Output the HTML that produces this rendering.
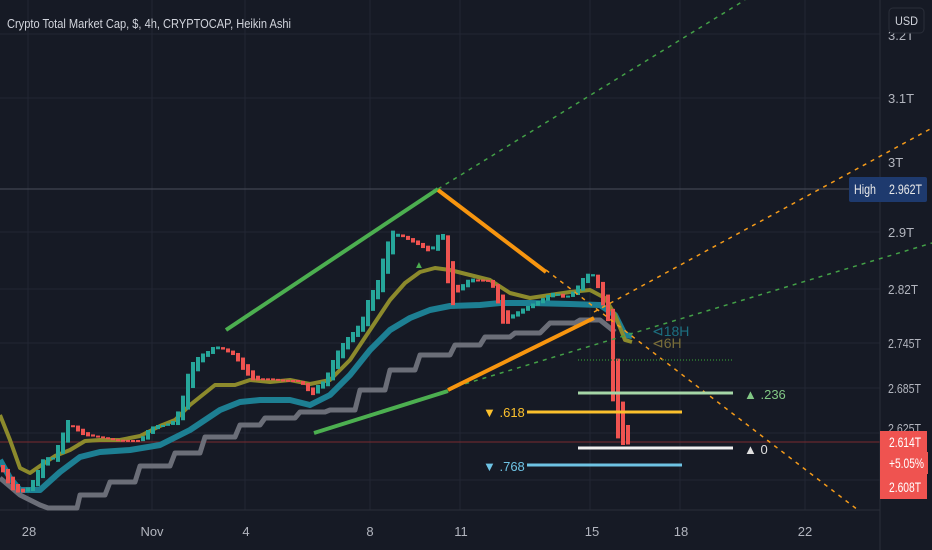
<!DOCTYPE html>
<html><head><meta charset="utf-8"><style>
html,body{margin:0;padding:0;background:#161a25;width:932px;height:550px;overflow:hidden}
svg{display:block}
text{font-family:"Liberation Sans",sans-serif}
</style></head><body>
<svg id="s" width="932" height="550" viewBox="0 0 932 550" xmlns="http://www.w3.org/2000/svg">
<rect width="932" height="550" fill="#161a25"/>
<g stroke="#222633" stroke-width="1">
<line x1="0" y1="34" x2="880" y2="34"/><line x1="0" y1="98" x2="880" y2="98"/><line x1="0" y1="232" x2="880" y2="232"/>
<line x1="0" y1="289" x2="880" y2="289"/><line x1="0" y1="343" x2="880" y2="343"/><line x1="0" y1="388" x2="880" y2="388"/>
<line x1="0" y1="433" x2="880" y2="433"/><line x1="0" y1="480" x2="880" y2="480"/>
<line x1="28" y1="0" x2="28" y2="510"/><line x1="152" y1="0" x2="152" y2="510"/><line x1="245" y1="0" x2="245" y2="510"/>
<line x1="370" y1="0" x2="370" y2="510"/><line x1="460" y1="0" x2="460" y2="510"/><line x1="590" y1="0" x2="590" y2="510"/>
<line x1="680" y1="0" x2="680" y2="510"/><line x1="805" y1="0" x2="805" y2="510"/>
</g>
<line x1="0" y1="189" x2="880" y2="189" stroke="#4a4e5a" stroke-width="1"/>
<line x1="0" y1="442" x2="880" y2="442" stroke="#7a2a2e" stroke-width="1"/>
<line x1="880" y1="0" x2="880" y2="550" stroke="#2a2e39"/>
<line x1="0" y1="510" x2="880" y2="510" stroke="#2a2e39"/>
<g id="ma"></g>
<g id="cd"></g>
<g stroke-dasharray="4,5" stroke-width="1.5" fill="none">
<line x1="438" y1="189" x2="745" y2="0" stroke="#43a047"/>
<line x1="448" y1="389" x2="932" y2="243" stroke="#43a047"/>
<line x1="594" y1="312" x2="932" y2="128" stroke="#f59b1a"/>
<line x1="546" y1="270" x2="858" y2="510" stroke="#f59b1a"/>
</g>
<line x1="226" y1="330" x2="438" y2="189" stroke="#4caf50" stroke-width="4"/>
<line x1="438" y1="190" x2="546" y2="272" stroke="#f7950f" stroke-width="4"/>
<line x1="314" y1="433" x2="448" y2="391" stroke="#4caf50" stroke-width="4"/>
<line x1="448" y1="390" x2="594" y2="318" stroke="#f7950f" stroke-width="4"/>
<line x1="578" y1="360" x2="733" y2="360" stroke="#2e7d32" stroke-width="1.5" stroke-dasharray="1,2"/>
<line x1="578" y1="393" x2="733" y2="393" stroke="#a5d6a7" stroke-width="3"/>
<line x1="527" y1="412" x2="682" y2="412" stroke="#fbc02d" stroke-width="3"/>
<line x1="578" y1="448" x2="733" y2="448" stroke="#f0f0f0" stroke-width="3"/>
<line x1="527" y1="465" x2="682" y2="465" stroke="#6ec3e4" stroke-width="3"/>
<g font-size="13">
<text x="744" y="399" fill="#81c784">▲ .236</text>
<text x="483" y="417" fill="#fbc02d">▼ .618</text>
<text x="744" y="454" fill="#e0e0e0">▲ 0</text>
<text x="483" y="471" fill="#6ec3e4">▼ .768</text>
<text x="652" y="336" fill="#1c6f80" font-size="14">⊲18H</text>
<text x="652" y="348" fill="#7a6e3a" font-size="14">⊲6H</text>
<text x="414" y="268" fill="#4caf50" font-size="10">▲</text>
</g>
<text x="7" y="28" fill="#d1d4dc" font-size="13" textLength="284" lengthAdjust="spacingAndGlyphs">Crypto Total Market Cap, $, 4h, CRYPTOCAP, Heikin Ashi</text>
<g fill="#b2b5be" font-size="13">
<text x="888" y="40">3.2T</text><text x="888" y="103">3.1T</text><text x="888" y="167">3T</text>
<text x="888" y="237">2.9T</text><text x="888" y="294" textLength="30" lengthAdjust="spacingAndGlyphs">2.82T</text><text x="888" y="348" textLength="33" lengthAdjust="spacingAndGlyphs">2.745T</text>
<text x="888" y="393" textLength="33" lengthAdjust="spacingAndGlyphs">2.685T</text><text x="888" y="433" textLength="33" lengthAdjust="spacingAndGlyphs">2.625T</text>
</g>
<rect x="889" y="8" width="35" height="25" rx="4" fill="#161a25" stroke="#2a2e39"/>
<text x="895" y="25" fill="#d1d4dc" font-size="12" textLength="23" lengthAdjust="spacingAndGlyphs">USD</text>
<rect x="849" y="177" width="78" height="25" rx="2" fill="#1e3a6e"/>
<text x="854" y="194" fill="#e8e8e8" font-size="14" textLength="22" lengthAdjust="spacingAndGlyphs">High</text>
<text x="889" y="194" fill="#e8e8e8" font-size="14" textLength="33" lengthAdjust="spacingAndGlyphs">2.962T</text>
<rect x="880" y="431" width="47" height="22" fill="#ef5350"/>
<rect x="880" y="452" width="48" height="22" fill="#ef5350"/>
<rect x="880" y="473" width="47" height="26" fill="#ef5350"/>
<g fill="#fff" font-size="14"><text x="889" y="447" textLength="32" lengthAdjust="spacingAndGlyphs">2.614T</text><text x="889" y="468" textLength="35" lengthAdjust="spacingAndGlyphs">+5.05%</text><text x="889" y="492" textLength="32" lengthAdjust="spacingAndGlyphs">2.608T</text></g>
<g fill="#b2b5be" font-size="13" text-anchor="middle">
<text x="29" y="536">28</text><text x="152" y="536">Nov</text><text x="246" y="536">4</text><text x="370" y="536">8</text>
<text x="461" y="536">11</text><text x="592" y="536">15</text><text x="681" y="536">18</text><text x="805" y="536">22</text>
</g>
</svg>
<script>
(function(){
var NS="http://www.w3.org/2000/svg";
function pl(g,pts,c,w){var p=document.createElementNS(NS,"polyline");p.setAttribute("points",pts.map(function(a){return a.join(",");}).join(" "));p.setAttribute("fill","none");p.setAttribute("stroke",c);p.setAttribute("stroke-width",w);p.setAttribute("stroke-linejoin","round");g.appendChild(p);}
var ma=document.getElementById("ma");
var gray=[[0,478],[20,495],[40,505],[48,508],[77,508],[80,495],[105,495],[110,482],[135,482],[140,466],[170,466],[175,453],[200,453],[205,437],[235,437],[240,425],[260,425],[265,418],[295,418],[300,412],[325,412],[330,410],[355,410],[360,390],[385,390],[390,370],[415,370],[420,355],[450,355],[455,345],[480,345],[485,337],[510,337],[515,333],[540,333],[550,323],[575,323],[580,320],[600,320],[615,332]];
var teal=[[0,460],[10,478],[20,490],[40,490],[60,472],[80,457],[100,452],[130,450],[160,445],[190,430],[220,410],[240,402],[260,400],[290,400],[310,405],[330,395],[350,375],[370,350],[390,330],[410,318],[430,310],[450,306],[480,305],[500,303],[530,303],[570,304],[600,305],[615,315],[625,335],[632,336]];
var oli=[[0,415],[10,440],[20,468],[30,473],[40,466],[55,456],[70,450],[85,441],[100,440],[120,440],[140,436],[160,426],[175,420],[190,405],[205,393],[215,385],[235,385],[250,380],[270,382],[290,380],[310,384],[330,380],[350,360],[370,330],[390,300],[405,283],[420,272],[435,268],[450,270],[470,275],[490,280],[510,293],[530,298],[550,295],[570,292],[590,290],[605,298],[615,315],[625,340],[632,342]];
pl(ma,gray,"#6b6e78",5);pl(ma,teal,"#1d7f93",6);pl(ma,oli,"#8c8a2c",4);
var kp=[[0,465],[8,480],[15,490],[25,492],[33,480],[38,470],[45,455],[52,460],[60,440],[68,420],[75,428],[85,435],[100,437],[115,440],[130,440],[140,440],[148,430],[155,425],[165,425],[175,420],[182,400],[190,365],[200,355],[210,350],[215,345],[225,350],[235,355],[245,370],[255,380],[265,378],[280,380],[295,380],[305,385],[312,395],[318,385],[325,380],[335,355],[345,340],[355,330],[362,320],[368,300],[378,280],[385,250],[392,230],[400,235],[410,240],[420,245],[428,250],[435,245],[440,228],[445,238],[450,295],[455,295],[462,285],[470,278],[480,280],[490,280],[495,290],[500,305],[505,325],[512,315],[520,310],[530,305],[540,300],[548,295],[555,292],[565,298],[575,290],[585,275],[592,272],[598,285],[603,300],[608,315],[613,380],[618,420],[623,435],[628,440]];
function yAt(x){for(var i=1;i<kp.length;i++){if(x<=kp[i][0]){var a=kp[i-1],b=kp[i];return a[1]+(b[1]-a[1])*(x-a[0])/(b[0]-a[0]);}}return 440;}
var cd=document.getElementById("cd");var prev=yAt(0);
for(var x=3;x<=629;x+=5){var c=yAt(x);var o=prev;var ty=Math.min(o,c),h=Math.max(Math.abs(c-o)*1.3,2);
var r=document.createElementNS(NS,"rect");r.setAttribute("x",x-2);r.setAttribute("y",ty);r.setAttribute("width",4);r.setAttribute("height",h);r.setAttribute("fill",c<=o?"#26a69a":"#ef5350");cd.appendChild(r);prev=0.3*o+0.7*c;}
})();
</script>
</body></html>
